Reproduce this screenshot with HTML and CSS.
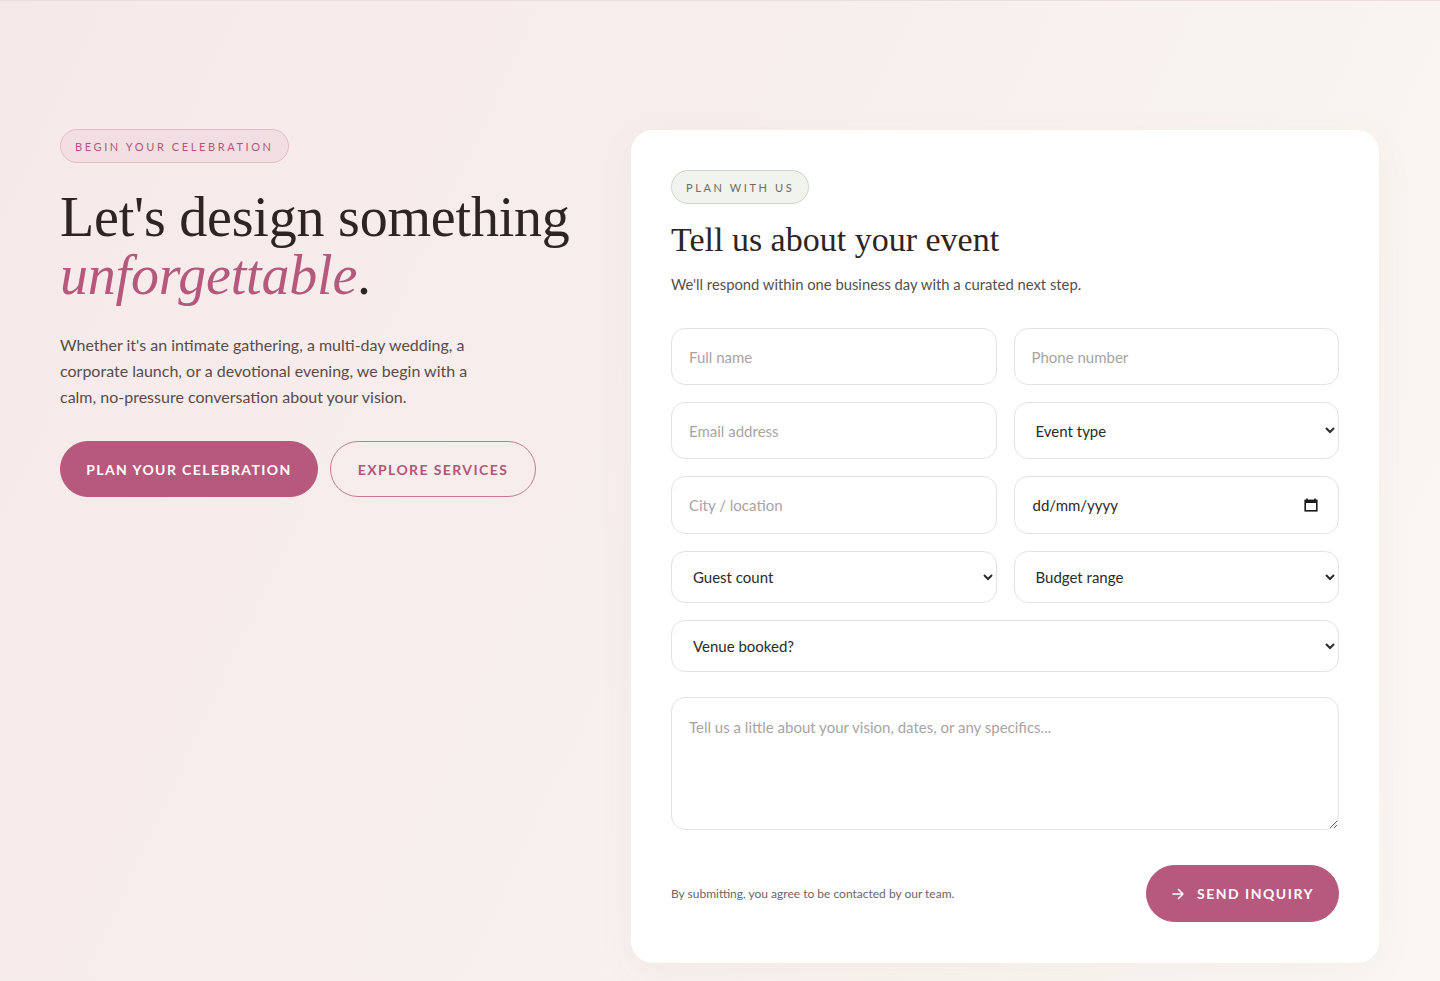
FILE: index.html
```html
<!DOCTYPE html>
<html lang="en-GB">
<head>
<meta charset="utf-8">
<title>Plan your celebration</title>
<link rel="stylesheet" href="styles.css">
</head>
<body>
<section class="inquiry">
  <div class="wrap">
    <div class="intro">
      <span class="pill pill-rose">BEGIN YOUR CELEBRATION</span>
      <h1 class="headline">Let's design something<br><em>unforgettable</em>.</h1>
      <p class="lede">Whether it's an intimate gathering, a multi-day wedding, a corporate launch, or a devotional evening, we begin with a calm, no-pressure conversation about your vision.</p>
      <div class="actions">
        <a class="btn btn-solid" href="#form">PLAN YOUR CELEBRATION</a>
        <a class="btn btn-outline" href="#services">EXPLORE SERVICES</a>
      </div>
    </div>
    <div class="card" id="form">
      <span class="pill pill-sage">PLAN WITH US</span>
      <h2 class="card-title">Tell us about your event</h2>
      <p class="card-sub">We'll respond within one business day with a curated next step.</p>
      <form class="form">
        <input class="field" type="text" placeholder="Full name">
        <input class="field" type="tel" placeholder="Phone number">
        <input class="field" type="email" placeholder="Email address">
        <select class="field select select-lg"><option>Event type</option></select>
        <input class="field tall" type="text" placeholder="City / location">
        <div class="field tall date">
          <span>dd/mm/yyyy</span>
          <svg class="cal" width="14" height="14" viewBox="0 0 14 14" aria-hidden="true"><path d="M3 0.5v2M11 0.5v2" stroke="#1a1a1a" stroke-width="1.6"/><rect x="1.2" y="2.4" width="11.6" height="10.4" fill="none" stroke="#1a1a1a" stroke-width="1.6"/><rect x="1.2" y="2.4" width="11.6" height="2.6" fill="#1a1a1a"/></svg>
        </div>
        <select class="field select"><option>Guest count</option></select>
        <select class="field select"><option>Budget range</option></select>
        <select class="field select span2"><option>Venue booked?</option></select>
        <textarea class="field area span2" placeholder="Tell us a little about your vision, dates, or any specifics..."></textarea>
        <div class="form-foot span2">
          <p class="consent">By submitting, you agree to be contacted by our team.</p>
          <button class="btn btn-solid btn-send" type="button">
            <svg width="14" height="14" viewBox="0 0 14 14" aria-hidden="true"><path d="M2 7h10M7.5 2.5L12 7l-4.5 4.5" fill="none" stroke="#fff" stroke-width="1.5" stroke-linecap="round" stroke-linejoin="round"/></svg>
            SEND INQUIRY
          </button>
        </div>
      </form>
    </div>
  </div>
</section>
</body>
</html>
```

FILE: styles.css
```css
* { box-sizing: border-box; }
html, body { margin: 0; padding: 0; }
body {
  font-family: Lato, "Open Sans", Arial, sans-serif;
  color: #2e2523;
  background: linear-gradient(115deg, #f6e9ea 0%, #f7eeec 40%, #f9f4ef 75%, #faf7f2 100%);
  min-height: 981px;
}
.inquiry {
  border-top: 1px solid #eadfdd;
  padding: 128px 0 18px;
}
.wrap {
  width: 1319px;
  margin: 0 0 0 60px;
  display: grid;
  grid-template-columns: 1fr 748px;
  column-gap: 55px;
  align-items: start;
}
.intro { display: flex; flex-direction: column; align-items: flex-start; }
.pill {
  display: inline-flex;
  align-items: center;
  height: 34px;
  padding: 0 14px;
  border-radius: 999px;
  font-size: 11px;
  letter-spacing: 2.6px;
  font-weight: 400;
  white-space: nowrap;
}
.pill-rose {
  background: #f3dfe3;
  border: 1px solid #e4bcc7;
  color: #b0587a;
}
.pill-sage {
  background: #f1f3ef;
  border: 1px solid #cfd5cc;
  color: #686d66;
}
.headline {
  margin: 25px 0 0;
  font-family: "Liberation Serif", "Times New Roman", serif;
  font-weight: 400;
  font-size: 56px;
  line-height: 58px;
  color: #2e2523;
  white-space: nowrap;
  letter-spacing: -0.2px;
}
.headline em { color: #b5587c; font-style: italic; }
.lede {
  margin: 28px 0 0;
  max-width: 430px;
  font-size: 16px;
  line-height: 26px;
  color: #5a4b4a;
}
.actions { display: flex; gap: 12px; margin-top: 31px; }
.btn {
  display: inline-flex;
  align-items: center;
  justify-content: center;
  height: 56px;
  border-radius: 999px;
  font-family: Lato, Arial, sans-serif;
  font-size: 14px;
  font-weight: 700;
  letter-spacing: 1.4px;
  text-decoration: none;
  white-space: nowrap;
  cursor: pointer;
}
.btn-solid {
  background: #b6597d;
  color: #fff;
  border: 1px solid #b6597d;
  width: 258px;
}
.btn-outline {
  background: transparent;
  color: #b1567a;
  border: 1px solid #c47a94;
  width: 206px;
}
.card {
  background: #fff;
  border-radius: 22px;
  padding: 40px;
  margin-top: 1px;
  box-shadow: 0 10px 40px rgba(140, 90, 90, 0.05);
  display: flex;
  flex-direction: column;
  align-items: flex-start;
}
.card-title {
  margin: 16px 0 0;
  font-family: "Liberation Serif", "Times New Roman", serif;
  font-weight: 400;
  font-size: 34px;
  line-height: 40px;
  color: #2e2523;
}
.card-sub {
  margin: 13px 0 0;
  font-size: 14.8px;
  line-height: 22px;
  color: #55504e;
}
.form {
  margin-top: 33px;
  width: 100%;
  display: grid;
  grid-template-columns: 1fr 1fr;
  gap: 17px;
}
.span2 { grid-column: 1 / span 2; }
.field {
  width: 100%;
  height: 57px;
  border: 1px solid #e6e2df;
  border-radius: 14px;
  background: #fff;
  padding: 0 17px;
  font-family: Lato, Arial, sans-serif;
  font-size: 15px;
  color: #2b2b2b;
  outline: none;
}
.field::placeholder { color: #a7a5a4; }
.tall { height: 58px; }
.select {
  height: 52px;
  padding: 0 12px 0 17px;
  color: #2b2b2b;
}
.select-lg { height: 57px; }
.date {
  display: flex;
  align-items: center;
  justify-content: space-between;
  padding: 0 20px 0 18px;
}
.cal { display: block; }
.area {
  height: 133px;
  margin-top: 8px;
  padding: 18px 17px;
  resize: vertical;
  line-height: 22px;
}
.form-foot {
  display: flex;
  align-items: center;
  justify-content: space-between;
  margin-top: 18px;
  margin-bottom: 1px;
}
.consent {
  margin: 0;
  font-size: 12px;
  color: #6b6766;
}
.btn-send {
  width: 193px;
  height: 57px;
  gap: 12px;
  font-size: 14px;
  letter-spacing: 1.5px;
}
```
